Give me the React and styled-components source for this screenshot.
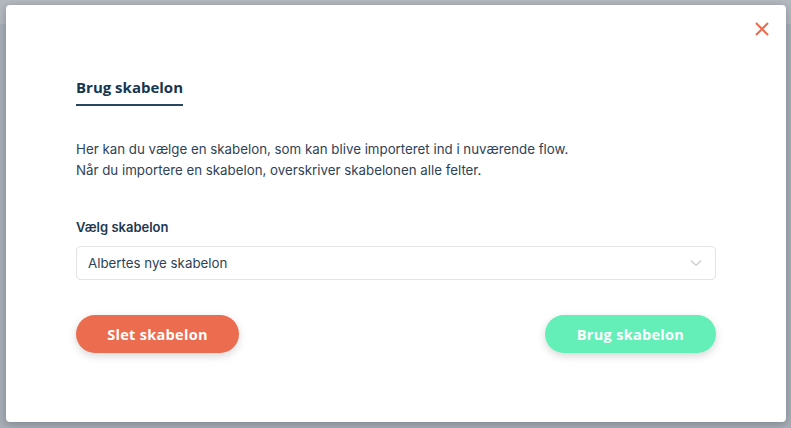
import React from 'react'
import styled, { createGlobalStyle } from 'styled-components'

const GlobalStyle = createGlobalStyle`
  html, body {
    margin: 0;
    padding: 0;
  }
  body {
    width: 791px;
    height: 428px;
    overflow: hidden;
    font-family: Inter, "Noto Sans", sans-serif;
  }
`

const Backdrop = styled.div`
  width: 791px;
  height: 428px;
  box-sizing: border-box;
  padding: 5px 5px 6px 6px;
  background: linear-gradient(to bottom, #b4b9bf 0, #b4b9bf 24px, #a8aeb6 24px);
`

const Modal = styled.div`
  position: relative;
  height: 100%;
  box-sizing: border-box;
  background: #fff;
  border-radius: 4px;
  box-shadow: 0 2px 8px rgba(40, 50, 60, 0.35);
  padding: 72px 70px 0 70px;
`

const Close = styled.button`
  position: absolute;
  top: 12px;
  right: 12px;
  width: 24px;
  height: 24px;
  padding: 0;
  border: 0;
  background: none;
  cursor: pointer;
  display: flex;
  align-items: center;
  justify-content: center;
`

const Tabs = styled.div`
  display: flex;
`

const Tab = styled.div`
  font-family: "Open Sans", sans-serif;
  font-weight: 700;
  font-size: 15px;
  color: #173650;
  padding-bottom: 7px;
  border-bottom: 2px solid #27465f;
  line-height: 20px;
`

const Intro = styled.p`
  margin: 33px 0 0;
  font-size: 13.3px;
  line-height: 21px;
  color: #2f4256;
`

const Field = styled.div`
  margin-top: 38px;
  display: flex;
  flex-direction: column;
  gap: 11px;
`

const Label = styled.label`
  font-size: 13px;
  font-weight: 600;
  color: #1d3850;
  line-height: 16px;
`

const Select = styled.div`
  height: 34px;
  box-sizing: border-box;
  border: 1px solid #e2e4e7;
  border-radius: 4px;
  padding: 0 13px 0 11px;
  display: flex;
  align-items: center;
  justify-content: space-between;
  font-size: 13.3px;
  color: #2f4256;
`

const Actions = styled.div`
  margin-top: 35px;
  display: flex;
  justify-content: space-between;
`

const Button = styled.button`
  height: 38px;
  width: ${p => p.$width}px;
  border: 0;
  border-radius: 19px;
  background: ${p => p.$bg};
  color: #fff;
  font-family: "Open Sans", sans-serif;
  font-weight: 700;
  font-size: 14.5px;
  letter-spacing: 0.3px;
  box-shadow: 0 3px 8px rgba(0, 0, 0, 0.16);
  cursor: pointer;
`

const Chevron = () => (
  <svg width="12" height="8" viewBox="0 0 12 8" fill="none">
    <path d="M1 1.5l5 5 5-5" stroke="#c9ccd0" strokeWidth="1.2" />
  </svg>
)

export default function App() {
  return (
    <>
      <GlobalStyle />
      <Backdrop>
        <Modal>
          <Close aria-label="Luk">
            <svg width="14" height="14" viewBox="0 0 14 14">
              <path d="M1 1l12 12M13 1L1 13" stroke="#ec6c4f" strokeWidth="2" />
            </svg>
          </Close>
          <Tabs>
            <Tab>Brug skabelon</Tab>
          </Tabs>
          <Intro>
            Her kan du vælge en skabelon, som kan blive importeret ind i nuværende flow.
            <br />
            Når du importere en skabelon, overskriver skabelonen alle felter.
          </Intro>
          <Field>
            <Label>Vælg skabelon</Label>
            <Select>
              <span>Albertes nye skabelon</span>
              <Chevron />
            </Select>
          </Field>
          <Actions>
            <Button $bg="#ec6c4f" $width={163}>Slet skabelon</Button>
            <Button $bg="#64efb9" $width={171}>Brug skabelon</Button>
          </Actions>
        </Modal>
      </Backdrop>
    </>
  )
}
